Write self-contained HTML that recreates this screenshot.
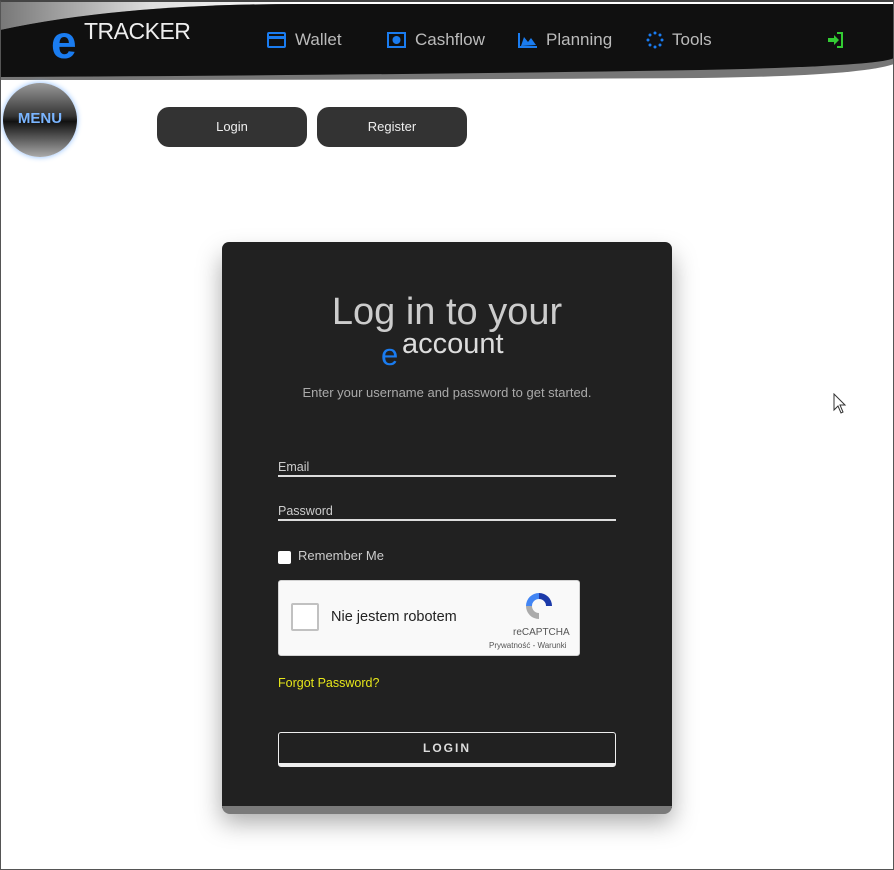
<!DOCTYPE html>
<html><head><meta charset="utf-8"><style>
*{box-sizing:border-box;margin:0;padding:0}
body{width:894px;height:870px;background:#fff;font-family:"Liberation Sans",sans-serif;position:relative;overflow:hidden}
.frame{position:absolute;left:0;top:0;width:894px;height:870px;border:1px solid #555;border-top:2px solid #444;pointer-events:none;z-index:9}
.hdr{position:absolute;left:0;top:0;width:894px;height:90px}
.nav{position:absolute;top:30px;color:#bbb;font-size:17px;display:flex;align-items:center;gap:8px}
.btn{position:absolute;top:107px;width:150px;height:40px;background:#333;border-radius:12px;color:#eee;font-size:13px;text-align:center;line-height:40px}
.card{position:absolute;left:222px;top:242px;width:450px;height:566px;background:#212121;border-radius:7px 7px 0 0;box-shadow:0 14px 25px rgba(0,0,0,.35)}
.strip{position:absolute;left:222px;top:806px;width:450px;height:8px;background:#7a7a7a;border-radius:0 0 8px 8px}
.t{position:absolute;color:#ccc}
.line{position:absolute;left:278px;width:338px;height:2px;background:#ddd}
</style></head><body>
<div class="frame"></div>
<svg class="hdr" viewBox="0 0 894 90">
<defs><linearGradient id="g" x1="0" x2="1"><stop offset="0" stop-color="#777"/><stop offset="0.5" stop-color="#ddd"/><stop offset="1" stop-color="#fff"/></linearGradient></defs>
<path d="M0 0 L300 0 L300 4 Q120 4 0 30Z" fill="url(#g)"/>
<path d="M0 80 L0 30 Q120 4 300 4 L894 4 L894 64 Q860 76 700 78 Q400 80 0 80Z" fill="#777"/>
<path d="M0 77 L0 30 Q120 4 300 4 L894 4 L894 58 Q880 66 700 70 Q400 75 0 77Z" fill="#101010"/>
</svg>
<div class="t" style="left:51px;top:15px;color:#1a7cf0;font-size:46px;font-weight:bold">e</div>
<div class="t" style="left:84px;top:18px;color:#eee;font-size:23px;letter-spacing:-0.5px">TRACKER</div>
<div class="nav" style="left:267px"><svg width="20" height="16"><rect x="1" y="1" width="17" height="14" rx="1" fill="none" stroke="#1a7cf0" stroke-width="2"/><rect x="1" y="4" width="17" height="3" fill="#1a7cf0"/></svg>Wallet</div>
<div class="nav" style="left:387px"><svg width="20" height="16"><rect x="1" y="1" width="17" height="14" fill="none" stroke="#1a7cf0" stroke-width="2"/><circle cx="9.5" cy="8" r="4" fill="#1a7cf0"/></svg>Cashflow</div>
<div class="nav" style="left:518px"><svg width="20" height="16"><path d="M1 1V15H19" stroke="#1a7cf0" stroke-width="2" fill="none"/><path d="M3 14L6 5L10 10L13 6L18 13Z" fill="#1a7cf0"/></svg>Planning</div>
<div class="nav" style="left:646px"><svg width="18" height="18" fill="#1a7cf0"><circle cx="9" cy="2" r="1.5"/><circle cx="14" cy="4" r="1.5"/><circle cx="16" cy="9" r="1.5"/><circle cx="14" cy="14" r="1.5"/><circle cx="9" cy="16" r="1.5"/><circle cx="4" cy="14" r="1.5"/><circle cx="2" cy="9" r="1.5"/><circle cx="4" cy="4" r="1.5"/></svg>Tools</div>
<svg style="position:absolute;left:827px;top:32px" width="16" height="16"><path d="M1 6H7V3L12 8L7 13V10H1Z" fill="#3c3"/><path d="M10 1H15V15H10" stroke="#3c3" stroke-width="2" fill="none"/></svg>
<div style="position:absolute;left:3px;top:83px;width:74px;height:74px;border-radius:50%;background:linear-gradient(#999,#333 45%,#111 52%,#aaa);box-shadow:0 0 6px #8bf;color:#7ab5ff;font-weight:bold;font-size:15px;text-align:center;line-height:72px">MENU</div>
<div class="btn" style="left:157px">Login</div>
<div class="btn" style="left:317px">Register</div>
<div class="card"></div><div class="strip"></div>
<div class="t" style="left:222px;width:450px;text-align:center;top:291px;font-size:38px;color:#ccc">Log in to your</div>
<div class="t" style="left:381px;top:337px;font-size:31px;color:#1a7cf0">e</div>
<div class="t" style="left:402px;top:328px;font-size:29px;color:#ddd">account</div>
<div class="t" style="left:222px;width:450px;text-align:center;top:385px;font-size:13px;color:#aaa">Enter your username and password to get started.</div>
<div class="t" style="left:278px;top:460px;font-size:12.5px">Email</div><div class="line" style="top:475px"></div>
<div class="t" style="left:278px;top:504px;font-size:12.5px">Password</div><div class="line" style="top:519px"></div>
<div style="position:absolute;left:278px;top:551px;width:13px;height:13px;background:#fff;border-radius:2px"></div>
<div class="t" style="left:298px;top:548px;font-size:13px">Remember Me</div>
<div style="position:absolute;left:278px;top:580px;width:302px;height:76px;background:#f9f9f9;border:1px solid #d3d3d3;border-radius:3px"></div>
<div style="position:absolute;left:291px;top:603px;width:28px;height:28px;background:#fff;border:2px solid #c1c1c1;border-radius:2px"></div>
<div class="t" style="left:331px;top:609px;font-size:14.5px;color:#222">Nie jestem robotem</div>
<svg style="position:absolute;left:523px;top:590px" width="32" height="32"><path d="M16 3A13 13 0 0 1 29 16H23A7 7 0 0 0 16 9Z" fill="#1c3aa9"/><path d="M3 16A13 13 0 0 1 16 3V9A7 7 0 0 0 9 16Z" fill="#4285f4"/><path d="M16 29A13 13 0 0 1 3 16H9A7 7 0 0 0 16 23Z" fill="#ababab"/></svg>
<div class="t" style="left:513px;top:627px;font-size:10px;color:#555">reCAPTCHA</div>
<div class="t" style="left:489px;top:641px;font-size:8px;color:#555">Prywatność - Warunki</div>
<div class="t" style="left:278px;top:676px;font-size:12.5px;color:#e6e61a">Forgot Password?</div>
<div style="position:absolute;left:278px;top:732px;width:338px;height:35px;border:1.5px solid #eee;border-bottom:4px solid #eee;border-radius:3px;color:#ddd;font-weight:bold;font-size:12px;letter-spacing:2px;text-align:center;line-height:30px">LOGIN</div>
<svg style="position:absolute;left:833px;top:393px" width="14" height="22"><path d="M1 1V17L5 13L8 20L10 19L7 12H12Z" fill="#fff" stroke="#333"/></svg>
</body></html>
